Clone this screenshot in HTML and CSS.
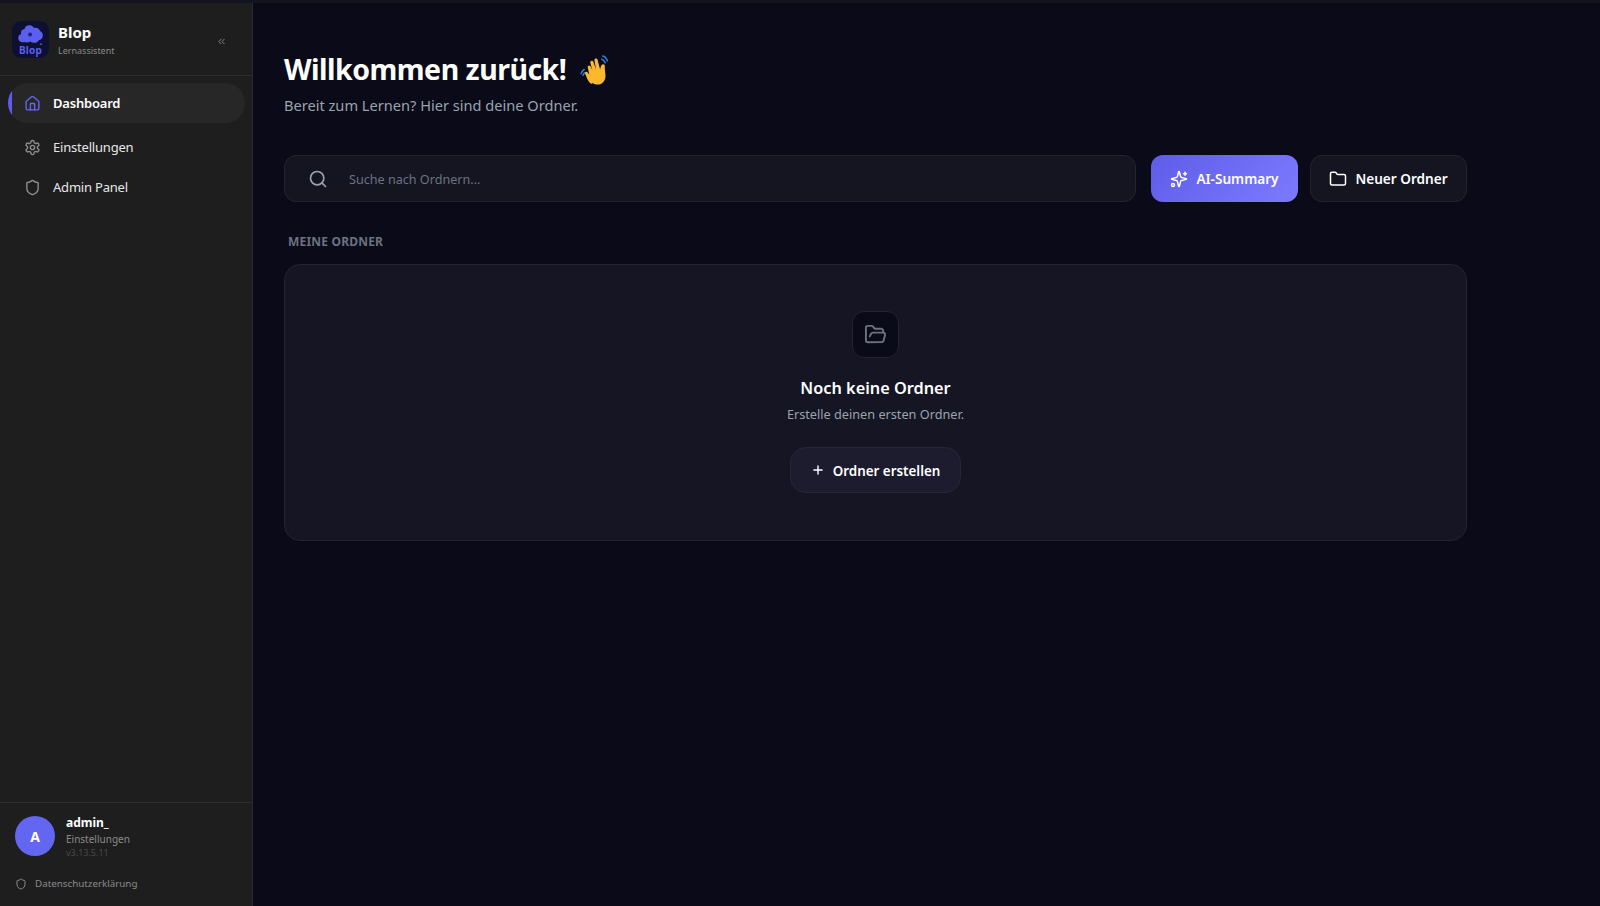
FILE: index.html
```html
<!DOCTYPE html>
<html lang="de">
<head>
<meta charset="utf-8">
<title>Blop</title>
<link rel="stylesheet" href="styles.css">
</head>
<body>
<div class="topline"></div>
<div class="app">
  <aside class="sidebar">
    <header class="brand">
      <div class="logo">
        <svg class="logo-cloud" viewBox="0 0 30 24"><path fill="#5b5ff0" d="M7 21c-3.500 0-6-2-6-5 0-2.500 1.500-4 3.500-4.500C3.500 8.500 5 6 8 6c.5-3 3.500-5 6.500-4.500 2 .3 3.500 1.500 4.500 3 3-1 6 .5 7 3.500 2.500 1 3.500 3.500 3 6-.5 2.500-2 4-4.500 4.500-1 2-3 3-5.500 3-1.500 0-3-.5-4-1.500-2 1-4 1.500-8 .5z"/><circle cx="14.500" cy="12" r="2.200" fill="#1e2270"/><circle cx="27" cy="23" r="1" fill="#5b5ff0"/></svg>
        <span class="logo-text">Blop</span>
      </div>
      <div class="brand-text">
        <div class="brand-name">Blop</div>
        <div class="brand-sub">Lernassistent</div>
      </div>
      <svg class="collapse" viewBox="0 0 24 24" fill="none" stroke="currentColor" stroke-width="2" stroke-linecap="round" stroke-linejoin="round"><path d="m11 17-5-5 5-5"/><path d="m18 17-5-5 5-5"/></svg>
    </header>
    <nav class="nav">
      <a class="nav-item active">
        <svg class="nav-icon" viewBox="0 0 24 24" fill="none" stroke="currentColor" stroke-width="2" stroke-linecap="round" stroke-linejoin="round"><path d="M15 21v-8a1 1 0 0 0-1-1h-4a1 1 0 0 0-1 1v8"/><path d="M3 10a2 2 0 0 1 .709-1.528l7-5.999a2 2 0 0 1 2.582 0l7 5.999A2 2 0 0 1 21 10v9a2 2 0 0 1-2 2H5a2 2 0 0 1-2-2z"/></svg>
        <span>Dashboard</span>
      </a>
      <a class="nav-item">
        <svg class="nav-icon" viewBox="0 0 24 24" fill="none" stroke="currentColor" stroke-width="2" stroke-linecap="round" stroke-linejoin="round"><path d="M12.220 2h-.44a2 2 0 0 0-2 2v.18a2 2 0 0 1-1 1.730l-.43.250a2 2 0 0 1-2 0l-.150-.080a2 2 0 0 0-2.730.730l-.220.380a2 2 0 0 0 .730 2.730l.150.100a2 2 0 0 1 1 1.720v.510a2 2 0 0 1-1 1.740l-.150.090a2 2 0 0 0-.730 2.730l.220.380a2 2 0 0 0 2.730.730l.150-.080a2 2 0 0 1 2 0l.430.250a2 2 0 0 1 1 1.730V20a2 2 0 0 0 2 2h.440a2 2 0 0 0 2-2v-.180a2 2 0 0 1 1-1.730l.430-.250a2 2 0 0 1 2 0l.150.080a2 2 0 0 0 2.730-.730l.220-.390a2 2 0 0 0-.730-2.730l-.150-.080a2 2 0 0 1-1-1.740v-.500a2 2 0 0 1 1-1.740l.150-.090a2 2 0 0 0 .730-2.730l-.220-.380a2 2 0 0 0-2.730-.730l-.150.080a2 2 0 0 1-2 0l-.430-.250a2 2 0 0 1-1-1.730V4a2 2 0 0 0-2-2z"/><circle cx="12" cy="12" r="3"/></svg>
        <span>Einstellungen</span>
      </a>
      <a class="nav-item">
        <svg class="nav-icon" viewBox="0 0 24 24" fill="none" stroke="currentColor" stroke-width="2" stroke-linecap="round" stroke-linejoin="round"><path d="M20 13c0 5-3.500 7.500-7.660 8.950a1 1 0 0 1-.670-.010C7.500 20.500 4 18 4 13V6a1 1 0 0 1 1-1c2 0 4.500-1.200 6.240-2.720a1.170 1.170 0 0 1 1.520 0C14.510 3.810 17 5 19 5a1 1 0 0 1 1 1z"/></svg>
        <span>Admin Panel</span>
      </a>
    </nav>
    <footer class="side-foot">
      <div class="user">
        <div class="avatar">A</div>
        <div class="user-text">
          <div class="user-name">admin_</div>
          <div class="user-link">Einstellungen</div>
          <div class="user-version">v3.13.5.11</div>
        </div>
      </div>
      <a class="privacy">
        <svg class="privacy-icon" viewBox="0 0 24 24" fill="none" stroke="currentColor" stroke-width="2" stroke-linecap="round" stroke-linejoin="round"><path d="M20 13c0 5-3.500 7.500-7.660 8.950a1 1 0 0 1-.670-.010C7.500 20.500 4 18 4 13V6a1 1 0 0 1 1-1c2 0 4.500-1.200 6.240-2.720a1.170 1.170 0 0 1 1.520 0C14.510 3.810 17 5 19 5a1 1 0 0 1 1 1z"/></svg>
        <span>Datenschutzerklärung</span>
      </a>
    </footer>
  </aside>
  <main class="main">
    <div class="content">
      <h1 class="title">Willkommen zurück! <svg class="wave" viewBox="0 0 32 32"><g fill="none" stroke="#2f7fd6" stroke-width="1.500" stroke-linecap="round"><path d="M5 16c-1.500 1-2.500 2.500-3 4"/><path d="M7 19c-1.500 0-2.500 1-3 2.500"/><path d="M23 3c2 .3 3.500 2 4.500 4.500"/><path d="M22 6c1.500 .3 2.500 1.500 3.500 3.500"/></g><path fill="#fdb92e" d="M12 30c-3-2-4.500-6-6-10-.6-1.800 1.300-2.600 2.400-1.200L10 21 8.500 14c-.4-1.800 2-2.600 2.800-.8L13 17l-2-7.500c-.5-2 2.200-2.800 3-.8l2.400 7.300-1.400-9c-.3-2 2.400-2.500 3-.5l2.500 9.500c.3-2 .8-4 1.800-4.700 1.400-1 3 0 2.800 1.700-.3 2.500 .2 5 .5 7.500.5 4-1 7.500-4 9.200-2.800 1.500-5.600 1.200-8.600-.7z"/></svg></h1>
      <p class="subtitle">Bereit zum Lernen? Hier sind deine Ordner.</p>
      <div class="toolbar">
        <label class="search">
          <svg class="search-icon" viewBox="0 0 24 24" fill="none" stroke="currentColor" stroke-width="2" stroke-linecap="round" stroke-linejoin="round"><circle cx="11" cy="11" r="8"/><path d="m21 21-4.300-4.300"/></svg>
          <input class="search-input" type="text" placeholder="Suche nach Ordnern...">
        </label>
        <button class="btn btn-primary">
          <svg class="btn-icon" viewBox="0 0 24 24" fill="none" stroke="currentColor" stroke-width="2" stroke-linecap="round" stroke-linejoin="round"><path d="M9.937 15.500A2 2 0 0 0 8.500 14.063l-6.135-1.582a.5.500 0 0 1 0-.962L8.500 9.936A2 2 0 0 0 9.937 8.500l1.582-6.135a.5.500 0 0 1 .963 0L14.063 8.500A2 2 0 0 0 15.500 9.937l6.135 1.581a.5.500 0 0 1 0 .964L15.500 14.063a2 2 0 0 0-1.437 1.437l-1.582 6.135a.5.500 0 0 1-.963 0z"/><path d="M20 3v4"/><path d="M22 5h-4"/><circle cx="4" cy="20" r="2"/></svg>
          AI-Summary
        </button>
        <button class="btn btn-dark">
          <svg class="btn-icon" viewBox="0 0 24 24" fill="none" stroke="currentColor" stroke-width="2" stroke-linecap="round" stroke-linejoin="round"><path d="M20 20a2 2 0 0 0 2-2V8a2 2 0 0 0-2-2h-7.900a2 2 0 0 1-1.690-.900L9.600 3.900A2 2 0 0 0 7.930 3H4a2 2 0 0 0-2 2v13a2 2 0 0 0 2 2Z"/></svg>
          Neuer Ordner
        </button>
      </div>
      <h2 class="section-label">MEINE ORDNER</h2>
      <section class="empty">
        <div class="empty-icon">
          <svg viewBox="0 0 24 24" fill="none" stroke="currentColor" stroke-width="2" stroke-linecap="round" stroke-linejoin="round"><path d="m6 14 1.500-2.900A2 2 0 0 1 9.240 10H20a2 2 0 0 1 1.940 2.500l-1.540 6a2 2 0 0 1-1.950 1.500H4a2 2 0 0 1-2-2V5a2 2 0 0 1 2-2h3.900a2 2 0 0 1 1.690.900l.810 1.200a2 2 0 0 0 1.670.900H18a2 2 0 0 1 2 2v2"/></svg>
        </div>
        <h3 class="empty-title">Noch keine Ordner</h3>
        <p class="empty-text">Erstelle deinen ersten Ordner.</p>
        <button class="btn-create">
          <svg class="plus-icon" viewBox="0 0 24 24" fill="none" stroke="currentColor" stroke-width="2" stroke-linecap="round" stroke-linejoin="round"><path d="M5 12h14"/><path d="M12 5v14"/></svg>
          <span class="btn-create-label">Ordner erstellen</span>
        </button>
      </section>
    </div>
  </main>
</div>
</body>
</html>
```
FILE: styles.css
```css
* { box-sizing: border-box; }
html, body { height: 100%; }
body {
  margin: 0;
  background: #0a0a18;
  color: #fff;
  font-family: "Noto Sans", "Open Sans", sans-serif;
  display: flex;
  flex-direction: column;
  overflow: hidden;
}
.topline { height: 3px; background: #14141f; flex: none; }
.app { flex: 1; display: flex; min-height: 0; }

.sidebar {
  width: 253px;
  flex: none;
  background: #1e1e1e;
  border-right: 1px solid #2a2a2e;
  display: flex;
  flex-direction: column;
}
.brand {
  height: 73px;
  padding: 0 25px 0 12px;
  display: flex;
  align-items: center;
  gap: 9px;
  border-bottom: 1px solid #2e2e2e;
  flex: none;
}
.logo {
  width: 37px;
  height: 37px;
  border-radius: 9px;
  background: #0d1030;
  display: flex;
  flex-direction: column;
  align-items: center;
  flex: none;
  padding-top: 3px;
}
.logo-cloud { width: 27px; height: 21px; display: block; }
.logo-text { font-size: 10px; font-weight: 700; line-height: 11px; color: #5b5ff0; letter-spacing: .2px; }
.brand-text { flex: 1; min-width: 0; padding-top: 2px; }
.brand-name { font-size: 15px; font-weight: 700; line-height: 19px; }
.brand-sub { font-size: 9px; line-height: 14px; color: #8a8a8a; margin-top: 2px; }
.collapse { width: 11px; height: 11px; color: #8d8d8d; flex: none; margin-top: 4px; }

.nav { flex: 1; padding: 7px 7px 0 8px; }
.nav-item {
  display: flex;
  align-items: center;
  gap: 12px;
  height: 40px;
  padding: 0 0 0 16px;
  font-size: 13px;
  letter-spacing: -.2px;
  color: #e6e6e6;
  border-radius: 20px;
}
.nav-item.active {
  position: relative;
  overflow: hidden;
  background: #272727;
  color: #fff;
  font-weight: 600;
  margin-bottom: 4px;
}
.nav-item.active::before {
  content: "";
  position: absolute;
  left: 0;
  top: 0;
  bottom: 0;
  width: 4px;
  background: #5f5cf1;
}
.nav-icon { width: 17px; height: 17px; color: #8c8c8c; flex: none; }
.active .nav-icon { color: #6366f1; }

.side-foot { border-top: 1px solid #2e2e2e; padding: 13px 15px 0; height: 104px; flex: none; }
.user { display: flex; align-items: flex-start; gap: 11px; }
.avatar {
  width: 40px;
  height: 40px;
  border-radius: 50%;
  background: #6366f1;
  font-size: 14px;
  font-weight: 700;
  display: flex;
  align-items: center;
  justify-content: center;
  flex: none;
}
.user-text { margin-top: -2px; }
.user-name { font-size: 12px; font-weight: 700; line-height: 17px; }
.user-link { font-size: 10px; line-height: 15px; color: #8a8a8a; margin-top: 1px; }
.user-version { font-size: 9px; line-height: 12px; color: #4a4a4a; }
.privacy { display: flex; align-items: center; gap: 8px; margin-top: 18px; color: #8a8a8a; font-size: 9.800px; line-height: 14px; }
.privacy-icon { width: 12px; height: 12px; color: #8a8a8a; flex: none; }

.main { flex: 1; min-width: 0; padding: 0 0 0 31px; }
.content { width: 1183px; }
.title {
  margin: 44px 0 0;
  font-size: 28.500px;
  line-height: 44px;
  letter-spacing: -.5px;
  font-weight: 700;
  display: flex;
  align-items: center;
  gap: 13px;
}
.wave { width: 33px; height: 33px; flex: none; }
.subtitle { margin: 3px 0 0; font-size: 14.600px; line-height: 22px; color: #9ba3af; }

.toolbar { display: flex; gap: 15px; margin-top: 39px; height: 47px; }
.search {
  flex: 1;
  display: flex;
  align-items: center;
  gap: 21px;
  padding: 0 0 0 23px;
  background: #151522;
  border: 1px solid #24242f;
  border-radius: 12px;
}
.search-icon { width: 20px; height: 20px; color: #9ba3af; flex: none; }
.search-input {
  flex: 1;
  background: transparent;
  border: 0;
  outline: 0;
  padding: 2px 0 0;
  color: #fff;
  font: 12.600px "Noto Sans", "Open Sans", sans-serif;
}
.search-input::placeholder { color: #6b7280; opacity: 1; }
.btn {
  height: 47px;
  border-radius: 12px;
  display: flex;
  align-items: center;
  justify-content: center;
  gap: 8px;
  font: 600 13.600px "Noto Sans", "Open Sans", sans-serif;
  color: #fff;
  padding: 0;
}
.btn-icon { width: 18px; height: 18px; flex: none; }
.btn-primary { width: 147px; border: 0; background: linear-gradient(135deg, #5f5ce8, #7c7bff); }
.btn-dark { width: 157px; margin-left: -3px; background: #151522; border: 1px solid #24242f; }

.section-label {
  margin: 31px 0 0 4px;
  font-size: 12px;
  line-height: 18px;
  font-weight: 700;
  letter-spacing: .2px;
  color: #6b7280;
}
.empty {
  margin-top: 13px;
  height: 277px;
  background: #151523;
  border: 1px solid #24242f;
  border-radius: 16px;
  display: flex;
  flex-direction: column;
  align-items: center;
  padding-top: 46px;
}
.empty-icon {
  width: 47px;
  height: 47px;
  border-radius: 12px;
  background: #0a0a18;
  border: 1px solid #24242f;
  color: #6b7280;
  display: flex;
  align-items: center;
  justify-content: center;
}
.empty-icon svg { width: 23px; height: 23px; }
.empty-title { margin: 17px 0 0; font-size: 16.300px; line-height: 26px; font-weight: 600; }
.empty-text { margin: 4px 0 0; font-size: 12.700px; line-height: 18px; color: #9ba3af; }
.btn-create {
  margin-top: 24px;
  width: 171px;
  height: 46px;
  border-radius: 16px;
  background: #1c1c2e;
  border: 1px solid #26263a;
  color: #fff;
  font: 600 13.400px "Noto Sans", "Open Sans", sans-serif;
  display: flex;
  align-items: center;
  justify-content: center;
  gap: 8px;
  padding: 0;
}
.btn-create-label { padding-top: 2px; }
.plus-icon { width: 14px; height: 14px; flex: none; stroke-width: 2.400; }
```
